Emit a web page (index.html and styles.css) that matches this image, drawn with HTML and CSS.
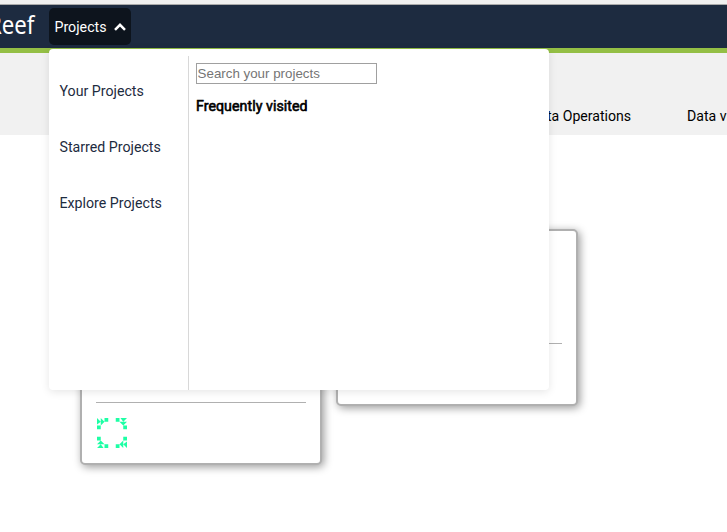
FILE: index.html
```html
<!DOCTYPE html>
<html lang="en">
<head>
<meta charset="utf-8">
<title>Reef</title>
<link rel="stylesheet" href="styles.css">
</head>
<body>
<header class="topbar">
  <span class="brand">Reef</span>
  <div class="projects">
    <button class="toggle">Projects
      <svg class="chevron" viewBox="0 0 12 8" width="12" height="8"><path d="M1 6.800 6 1.800l5 5" fill="none" stroke="#fff" stroke-width="2.500"/></svg>
    </button>
    <div class="dropdown">
      <nav class="menu">
        <a>Your Projects</a>
        <a>Starred Projects</a>
        <a>Explore Projects</a>
      </nav>
      <section class="search">
        <input type="text" placeholder="Search your projects">
        <p class="heading">Frequently visited</p>
      </section>
    </div>
  </div>
</header>
<nav class="tabs"><a>Data Operations</a><a>Data visualizations</a></nav>
<main class="cards">
  <article class="card tall">
    <hr>
    <svg class="identicon" viewBox="0 0 32 32" width="30" height="30" fill="#1dffa5">
      <defs><g id="corner"><path d="M8 0h4v4H8zM0 8h4v4H0zM0 0l4 4H0zM4 0l4 4H4zM0 4h4L0 7zM4 4h4L4 8z"/></g></defs>
      <use href="#corner"/>
      <use href="#corner" transform="rotate(90 16 16)"/>
      <use href="#corner" transform="rotate(180 16 16)"/>
      <use href="#corner" transform="rotate(270 16 16)"/>
    </svg>
  </article>
  <article class="card short"><hr></article>
</main>
</body>
</html>
```
FILE: styles.css
```css
* { box-sizing: border-box; }
body { margin: 0; height: 532px; overflow: hidden; background: #fff; font: 14.1px/20px Roboto, sans-serif; color: #000; }
.topbar { height: 53px; display: flex; background: #1d2b40; border-bottom: 5px solid #94bf45; box-shadow: inset 0 4px #f0f0f0, inset 0 5px #aaa; }
.brand { width: 49px; padding: 8px 0 0; margin-left: -12px; margin-right: 12px; font: 25.5px/32px "Noto Sans", sans-serif; color: #fff; transform: scaleX(.87); transform-origin: left; }
.projects { position: relative; padding-top: 8px; }
.toggle { display: flex; align-items: center; gap: 7px; width: 82px; height: 37px; padding: 0 0 0 5.5px; border: 0; border-radius: 5px; background: #0d141d; color: #fff; font: 14.2px/20px Roboto, sans-serif; }
.dropdown { position: absolute; left: 0; top: 49px; z-index: 2; display: flex; width: 500px; height: 341px; padding-top: 7px; background: #fff; border-radius: 4px; box-shadow: 0 2px 8px rgba(0,0,0,.1); }
.menu { width: 140px; padding: 25px 0 0 10.5px; border-right: 1px solid #d8d8d8; display: flex; flex-direction: column; gap: 36px; color: #1d2b40; font-size: 14.2px; }
.search { padding: 7px; }
.search input { display: block; width: 181px; height: 21px; padding: 1px 0 1px .6px; border: 1px solid #a0a0a0; font: 13.333px "Liberation Sans", sans-serif; }
.heading { margin: 12px 0 0; font-size: 14.2px; letter-spacing: .05px; -webkit-text-stroke: .6px #000; }
.tabs { height: 82px; padding: 53px 0 0 530px; display: flex; gap: 56px; background: #f1f1f1; white-space: nowrap; overflow: hidden; }
.cards { display: flex; align-items: flex-start; gap: 14px; padding: 94px 0 0 80px; }
.card { width: 242px; border: 2px solid #b0b0b0; border-radius: 5px; padding: 0 14px; background: #fff; box-shadow: 2px 2px 8px rgba(0,0,0,.4); }
.card hr { margin: 0; border: 0; border-top: 1px solid #b0b0b0; }
.tall { height: 236px; padding-top: 171px; }
.short { height: 177px; padding-top: 112px; }
.identicon { display: block; margin: 15px 0 0 1px; }
```
